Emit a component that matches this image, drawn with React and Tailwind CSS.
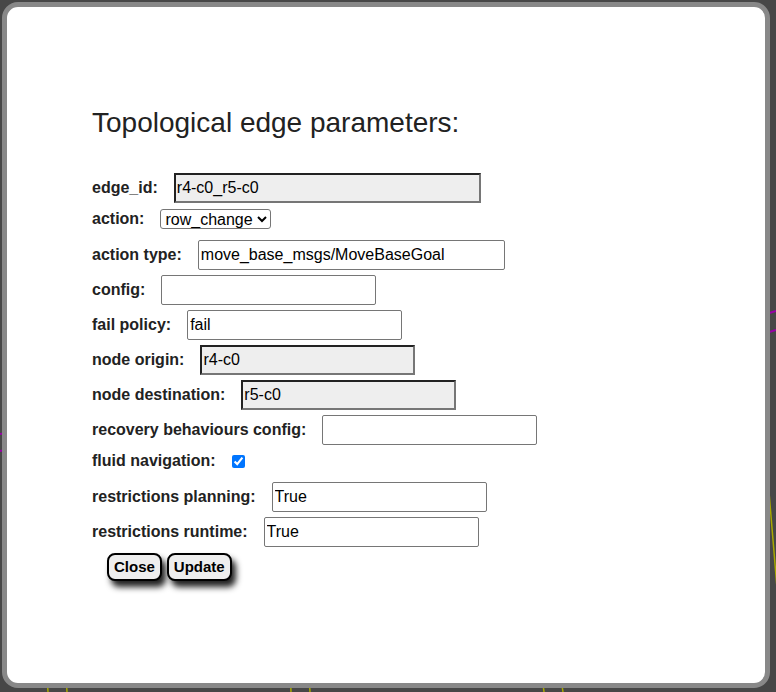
import { useState } from 'react';

const labelCls = "mr-[16px] text-[16px] font-bold text-[#222]";
const inputCls = "h-[30px] rounded-[2px] border border-solid border-[#767676] bg-white px-[2px] text-[16px] text-black outline-none";
const lockedCls = "h-[30px] border-2 border-solid border-t-[#222] border-l-[#222] border-r-[#767676] border-b-[#767676] bg-[#eee] px-[1px] text-[16px] text-black outline-none";

const Row = ({ label, children, short }) => (
  <div className={short ? "flex h-[32px] items-center pb-[5px]" : "flex h-[35px] items-center"}>
    <label className={labelCls}>{label}</label>
    {children}
  </div>
);

const App = () => {
  const [action, setAction] = useState('row_change');
  const [fluid, setFluid] = useState(true);

  return (
    <div className="relative h-[692px] w-[776px] overflow-hidden bg-[#474747]" style={{ fontFamily: '"Liberation Sans", Arial, sans-serif' }}>
      {/* map canvas behind the dialog */}
      <svg className="absolute inset-0" width="776" height="692">
        <g stroke="#a8a800" strokeWidth="1.5">
          <line x1="46" y1="660" x2="48" y2="692" />
          <line x1="65" y1="660" x2="67" y2="692" />
          <line x1="290" y1="660" x2="291" y2="692" />
          <line x1="308" y1="660" x2="310" y2="692" />
          <line x1="540" y1="660" x2="544" y2="692" />
          <line x1="558" y1="660" x2="563" y2="692" />
          <line x1="768" y1="480" x2="778" y2="600" />
        </g>
        <g stroke="#9a00a8" strokeWidth="2">
          <line x1="766" y1="314" x2="776" y2="311" />
          <line x1="766" y1="333" x2="776" y2="330" />
          <line x1="0" y1="434" x2="6" y2="433" />
          <line x1="0" y1="451" x2="6" y2="450" />
        </g>
      </svg>

      <div className="relative m-[2px] h-[686px] w-[768px] rounded-[16px] border-[5px] border-solid border-[#888] bg-white pl-[85px] pt-[100px]">
        <h2 className="mb-[31px] text-[28px] leading-[32px] font-normal text-[#222]">Topological edge parameters:</h2>

        <Row label="edge_id:">
          <input readOnly defaultValue="r4-c0_r5-c0" className={`${lockedCls} w-[307px]`} />
        </Row>
        <Row label="action:" short>
          <select
            value={action}
            onChange={(e) => setAction(e.target.value)}
            className="h-[20px] w-[111px] rounded-[3px] border border-solid border-[#767676] bg-white text-[16px] text-black"
          >
            <option value="row_change">row_change</option>
            <option value="move_base">move_base</option>
            <option value="row_traversal">row_traversal</option>
          </select>
        </Row>
        <Row label="action type:">
          <input defaultValue="move_base_msgs/MoveBaseGoal" className={`${inputCls} w-[307px]`} />
        </Row>
        <Row label="config:">
          <input defaultValue="" className={`${inputCls} w-[215px]`} />
        </Row>
        <Row label="fail policy:">
          <input defaultValue="fail" className={`${inputCls} w-[215px]`} />
        </Row>
        <Row label="node origin:">
          <input readOnly defaultValue="r4-c0" className={`${lockedCls} w-[215px]`} />
        </Row>
        <Row label="node destination:">
          <input readOnly defaultValue="r5-c0" className={`${lockedCls} w-[215px]`} />
        </Row>
        <Row label="recovery behaviours config:">
          <input defaultValue="" className={`${inputCls} w-[215px]`} />
        </Row>
        <Row label="fluid navigation:" short>
          <input type="checkbox" checked={fluid} onChange={(e) => setFluid(e.target.checked)} className="mt-[1px] h-[13px] w-[13px]" />
        </Row>
        <Row label="restrictions planning:">
          <input defaultValue="True" className={`${inputCls} w-[215px]`} />
        </Row>
        <Row label="restrictions runtime:">
          <input defaultValue="True" className={`${inputCls} w-[215px]`} />
        </Row>

        {/* Buttons */}
        <div className="ml-[15px] mt-[3.5px] flex gap-[5px]">
          <button className="h-[28px] rounded-[8px] border-2 border-solid border-black bg-[#eee] px-[5px] pt-[1px] text-[15px] font-bold text-black shadow-[4px_6px_6px_#222]">
            Close
          </button>
          <button className="h-[28px] rounded-[8px] border-2 border-solid border-black bg-[#eee] px-[5px] pt-[1px] text-[15px] font-bold text-black shadow-[4px_6px_6px_#222]">
            Update
          </button>
        </div>
      </div>
    </div>
  );
};

export default App;
